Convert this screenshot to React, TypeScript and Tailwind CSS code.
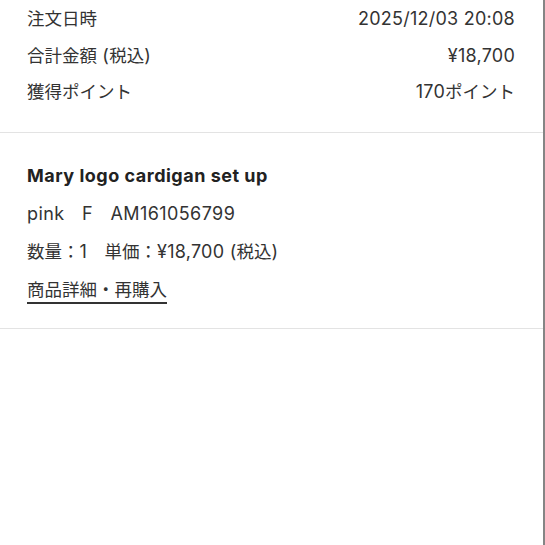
const font = { fontFamily: '"Inter", "Noto Sans CJK JP", sans-serif' };

// CJK glyphs sit a touch smaller than the Latin text in the original
function Mixed({ text }: { text: string }) {
  const parts = text.split(/([\u3000-\u30ff\u4e00-\u9fff\uff00-\uffef]+)/);
  return (
    <>
      {parts.map((p, i) =>
        i % 2 === 1 ? (
          <span key={i} className="text-[17.5px] tracking-normal">
            {p}
          </span>
        ) : (
          <span key={i}>{p}</span>
        )
      )}
    </>
  );
}

const summary = [
  { label: '注文日時', value: '2025/12/03 20:08' },
  { label: '合計金額 (税込)', value: '¥18,700' },
  { label: '獲得ポイント', value: '170ポイント' },
];

export default function App() {
  return (
    <div
      className="w-[545px] min-h-[545px] bg-white border-r-2 border-[#858585] text-[#333] text-[18px] tracking-[0.25px]"
      style={font}
    >
      {/* order summary */}
      <section className="pl-[27px] pr-[28px] pt-px pb-[21px] border-b border-[#e3e3e3]">
        {summary.map((row) => (
          <div key={row.label} className="flex justify-between items-baseline leading-[36.5px]">
            <span>
              <Mixed text={row.label} />
            </span>
            <span>
              <Mixed text={row.value} />
            </span>
          </div>
        ))}
      </section>

      {/* item */}
      <section className="pl-[27px] pr-[28px] pt-[24px] pb-[19px] border-b border-[#e3e3e3]">
        <p className="font-bold text-[#222] leading-[38px] tracking-[0.5px]">Mary logo cardigan set up</p>
        <p className="leading-[38px] tracking-[0.4px]">
          <Mixed text="pink　F　AM161056799" />
        </p>
        <p className="leading-[38px]">
          <Mixed text="数量：1　単価：¥18,700 (税込)" />
        </p>
        <p className="leading-[38px]">
          <a href="#" className="underline decoration-[1.5px] underline-offset-[6px] text-[#333]">
            <Mixed text="商品詳細・再購入" />
          </a>
        </p>
      </section>
    </div>
  );
}
